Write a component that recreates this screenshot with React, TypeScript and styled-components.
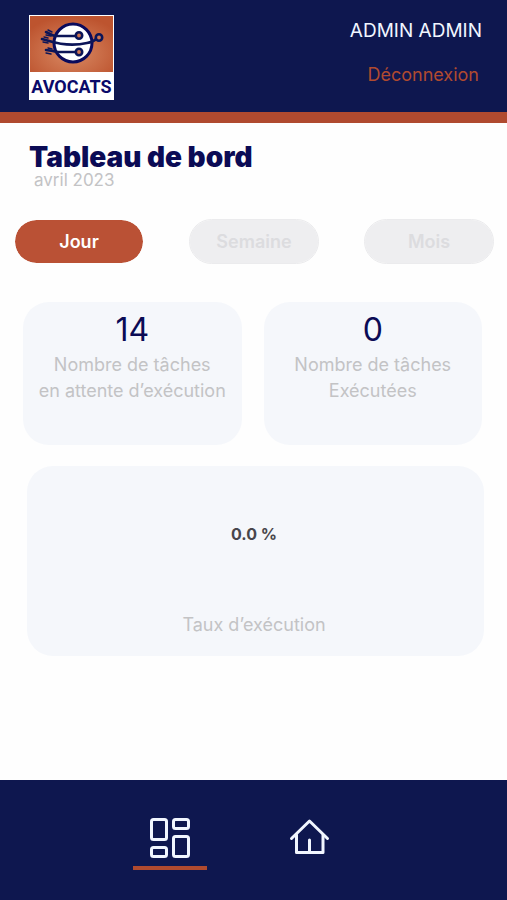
import React, { useState } from "react";
import styled, { createGlobalStyle } from "styled-components";

const navy = "#0e174f";
const ink = "#0b0b55";
const rust = "#b04a2f";
const panel = "#f5f7fb";
const muted = "#c3c3c5";

const GlobalStyle = createGlobalStyle`
  *, *::before, *::after { box-sizing: border-box; }
  body {
    margin: 0;
    background: #fefefe;
    font-family: Inter, "Open Sans", sans-serif;
  }
  button { font: inherit; border: 0; cursor: pointer; }
  a { text-decoration: none; }
  h1, p { margin: 0; }
`;

const Page = styled.div`
  min-height: 100vh;
  display: flex;
  flex-direction: column;
`;

const Header = styled.header`
  display: flex;
  justify-content: space-between;
  align-items: flex-start;
  padding: 15px 25px 12px 29px;
  background: ${navy};
  border-bottom: 11px solid ${rust};
`;

const Logo = styled.svg`
  display: block;
  width: 85px;
  height: 85px;
`;

const Account = styled.div`
  display: flex;
  flex-direction: column;
  align-items: flex-end;
  gap: 20px;
  padding-top: 4px;
`;

const UserName = styled.span`
  font-size: 19px;
  line-height: 24px;
  color: #f1f6ff;
`;

const Logout = styled.a`
  padding-right: 3px;
  font-size: 18px;
  line-height: 24px;
  color: ${rust};
`;

const Main = styled.main`
  flex: 1;
  padding-top: 20px;
`;

const Heading = styled.div`
  padding: 0 29px;
`;

const Title = styled.h1`
  font-size: 28px;
  line-height: 28px;
  font-weight: 900;
  color: ${ink};
`;

const Period = styled.p`
  padding-left: 5px;
  font-size: 17px;
  line-height: 18px;
  color: ${muted};
`;

const Filters = styled.div`
  display: flex;
  justify-content: space-between;
  align-items: center;
  padding: 30px 13px 0 14px;
`;

const Pill = styled.button<{ $active: boolean }>`
  width: 130px;
  height: 45px;
  padding: 0;
  border: ${({ $active }) => ($active ? "1px solid #fefefe" : "1px solid #ebebed")};
  border-radius: 23px;
  background: ${({ $active }) => ($active ? "#ba5135" : "#eeeef0")};
  background-clip: padding-box;
  color: ${({ $active }) => ($active ? "#fff" : "#dcdcdf")};
  font-size: 18px;
  font-weight: 600;
`;

const Stats = styled.div`
  display: grid;
  grid-template-columns: 1fr 1fr;
  gap: 22px;
  padding: 38px 25px 0 23px;
`;

const Card = styled.section`
  min-height: 143px;
  padding-top: 10px;
  border-radius: 26px;
  background: ${panel};
  text-align: center;
`;

const Count = styled.p`
  font-size: 32px;
  line-height: 36px;
  color: ${ink};
`;

const Caption = styled.p`
  padding-top: 4px;
  font-size: 18px;
  line-height: 26px;
  color: ${muted};
  white-space: nowrap;
`;

const RateCard = styled.section`
  display: flex;
  flex-direction: column;
  align-items: center;
  justify-content: space-between;
  min-height: 190px;
  margin: 21px 23px 24px 27px;
  padding: 56px 3px 18px 0;
  border-radius: 26px;
  background: ${panel};
`;

const Rate = styled.p`
  font-size: 16px;
  line-height: 24px;
  font-weight: 700;
  color: #48464c;
`;

const Nav = styled.nav`
  display: flex;
  justify-content: center;
  gap: 66px;
  min-height: 120px;
  padding: 34px 28px 0 0;
  background: ${navy};
`;

const NavItem = styled.a<{ $active?: boolean }>`
  display: flex;
  justify-content: center;
  width: 74px;
  height: 56px;
  padding-top: 2px;
  border-bottom: 4px solid ${({ $active }) => ($active ? rust : "transparent")};
`;

const NavIcon = styled.svg`
  width: 42px;
  height: 44px;
  fill: none;
  stroke: #f1f6ff;
  stroke-width: 3;
  stroke-linecap: round;
  stroke-linejoin: round;
`;

const LogoText = styled.text`
  font-family: Roboto, sans-serif;
  font-size: 18px;
  font-weight: 700;
  fill: #0a0a6a;
`;

function AvocatsLogo() {
  return (
    <Logo viewBox="0 0 85 85" role="img" aria-label="Avocats">
      <defs>
        <radialGradient id="copper" cx="50%" cy="65%" r="65%">
          <stop offset="0" stopColor="#d98a64" />
          <stop offset="1" stopColor="#bd542f" />
        </radialGradient>
      </defs>
      <rect width="85" height="85" fill="#fff" />
      <rect x="1" y="1" width="83" height="56" fill="url(#copper)" />
      <circle cx="44" cy="28" r="19" fill="#fff" stroke="#0a0a5c" strokeWidth="3" />
      <g fill="none" stroke="#0c1558" strokeWidth="2.6" strokeLinecap="round">
        <path d="M17 17l6 3q2 1 5 1h18" />
        <path d="M13 24l7 2q20 6 38 2q6-1 9-4" />
        <path d="M17 35l7 1q3 1 6 1h16" />
      </g>
      <g fill="none" stroke="#0c1558" strokeWidth="1.4" strokeLinecap="round">
        <path d="M19 15l4 2M17 20l5 1M15 22l4 1M14 27l5 1M19 33l4 1M17 38l5 1" />
      </g>
      <g fill="#cf7650" stroke="#0c1558" strokeWidth="2.6">
        <circle cx="50" cy="20.5" r="3.2" />
        <circle cx="50" cy="37" r="3.2" />
        <circle cx="70" cy="22.5" r="3.2" />
      </g>
      <LogoText x="42.5" y="78" textAnchor="middle">AVOCATS</LogoText>
    </Logo>
  );
}

function DashboardIcon() {
  return (
    <NavIcon viewBox="0 0 42 44" aria-hidden="true">
      <rect x="2.5" y="3.5" width="15" height="20" rx="2" />
      <rect x="24.5" y="3.5" width="15" height="9" rx="2" />
      <rect x="2.5" y="31.5" width="15" height="9" rx="2" />
      <rect x="24.5" y="20.5" width="15" height="20" rx="2" />
    </NavIcon>
  );
}

function HomeIcon() {
  return (
    <NavIcon viewBox="0 0 42 44" aria-hidden="true">
      <path d="M2.5 22.5L20.5 5L38.5 22.5" />
      <path d="M7.5 19v17.500h26.500v-17.500M20.500 36v-12" />
    </NavIcon>
  );
}

const periods = ["Jour", "Semaine", "Mois"];

const stats = [
  { count: 14, lines: ["Nombre de tâches", "en attente d’exécution"] },
  { count: 0, lines: ["Nombre de tâches", "Exécutées"] },
];

export default function App() {
  const [period, setPeriod] = useState("Jour");
  return (
    <Page>
      <GlobalStyle />
      <Header>
        <AvocatsLogo />
        <Account>
          <UserName>ADMIN ADMIN</UserName>
          <Logout href="#logout">Déconnexion</Logout>
        </Account>
      </Header>
      <Main>
        <Heading>
          <Title>Tableau de bord</Title>
          <Period>avril 2023</Period>
        </Heading>
        <Filters>
          {periods.map((name) => (
            <Pill
              key={name}
              type="button"
              $active={name === period}
              aria-pressed={name === period}
              onClick={() => setPeriod(name)}
            >
              {name}
            </Pill>
          ))}
        </Filters>
        <Stats>
          {stats.map(({ count, lines }) => (
            <Card key={lines[1]}>
              <Count>{count}</Count>
              <Caption>
                {lines[0]}
                <br />
                {lines[1]}
              </Caption>
            </Card>
          ))}
        </Stats>
        <RateCard>
          <Rate>0.0 %</Rate>
          <Caption>Taux d’exécution</Caption>
        </RateCard>
      </Main>
      <Nav aria-label="Navigation principale">
        <NavItem href="#tableau" $active aria-label="Tableau de bord" aria-current="page">
          <DashboardIcon />
        </NavItem>
        <NavItem href="#accueil" aria-label="Accueil">
          <HomeIcon />
        </NavItem>
      </Nav>
    </Page>
  );
}
